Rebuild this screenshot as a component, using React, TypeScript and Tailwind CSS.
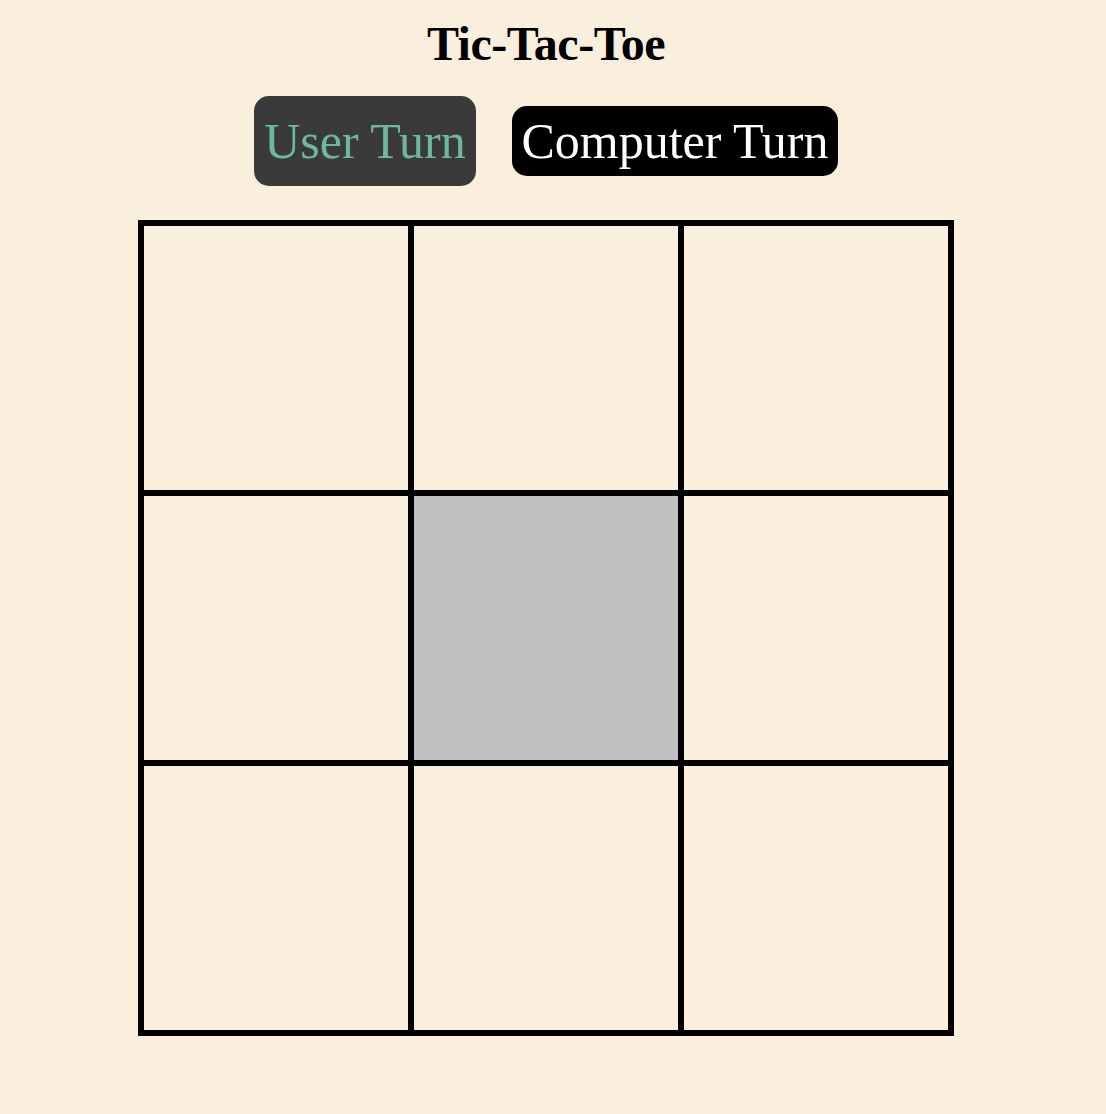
import React from "react";

export default function App() {
  const cells = Array.from({ length: 9 }, (_, i) => i);
  return (
    <div className="min-h-[1114px] w-full bg-[#faeedd]" style={{ fontFamily: '"Liberation Serif", "Times New Roman", serif' }}>
      <div className="w-[1092px] flex flex-col items-center">
        <h1 className="mt-[20px] text-[48px] leading-[48px] font-bold text-black tracking-[-0.5px]">Tic-Tac-Toe</h1>
        <div className="mt-[28px] flex items-center gap-[36px]">
          <button className="h-[90px] w-[222px] flex items-center justify-center rounded-[15px] bg-[#3a3a3a] text-[#6fb89b] text-[50px] leading-none whitespace-nowrap">User Turn</button>
          <button className="h-[70px] w-[326px] flex items-center justify-center rounded-[15px] bg-black text-white text-[50px] leading-none whitespace-nowrap">Computer Turn</button>
        </div>
        <div className="mt-[34px] grid grid-cols-[264px_264px_264px] grid-rows-[264px_264px_264px] gap-[6px] bg-black p-[6px]">
          {cells.map((i) => (
            <div key={i} className={i === 4 ? "bg-[#c1c1c1]" : "bg-[#faeedd]"} />
          ))}
        </div>
      </div>
    </div>
  );
}
